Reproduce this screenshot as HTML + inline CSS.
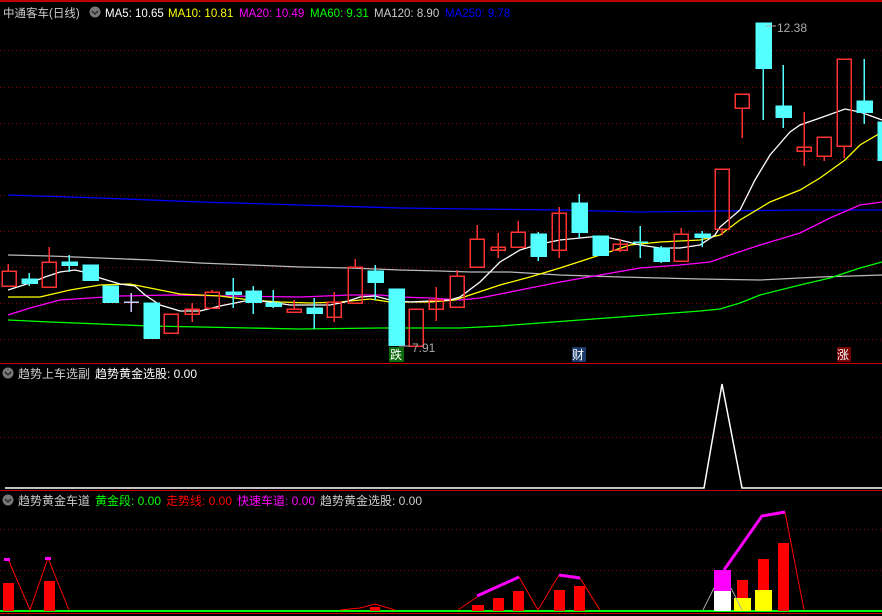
<!DOCTYPE html><html><head><meta charset="utf-8"><style>
body{margin:0;background:#000;width:882px;height:616px;overflow:hidden}
svg{display:block}
text{font-family:"Liberation Sans","Noto Sans CJK SC",sans-serif;font-size:12px}
.h{font-size:11.5px}
</style></head><body>
<svg width="882" height="616" viewBox="0 0 882 616" xmlns="http://www.w3.org/2000/svg" shape-rendering="crispEdges">
<rect width="882" height="616" fill="#000"/>
<line x1="0" y1="1" x2="882" y2="1" stroke="#b00" stroke-width="2"/>
<line x1="0" y1="363.5" x2="882" y2="363.5" stroke="#c00"/>
<line x1="0" y1="490.5" x2="882" y2="490.5" stroke="#c00"/>
<line x1="0" y1="613.5" x2="882" y2="613.5" stroke="#c00"/>
<g stroke="#800" stroke-dasharray="1,3">
<line x1="0" y1="50.5" x2="882" y2="50.5"/><line x1="0" y1="87.5" x2="882" y2="87.5"/><line x1="0" y1="123.5" x2="882" y2="123.5"/><line x1="0" y1="159.5" x2="882" y2="159.5"/><line x1="0" y1="195.5" x2="882" y2="195.5"/><line x1="0" y1="231.5" x2="882" y2="231.5"/><line x1="0" y1="267.5" x2="882" y2="267.5"/><line x1="0" y1="303.5" x2="882" y2="303.5"/><line x1="0" y1="339.5" x2="882" y2="339.5"/>
<line x1="0" y1="437.5" x2="882" y2="437.5"/><line x1="0" y1="529.5" x2="882" y2="529.5"/><line x1="0" y1="570.5" x2="882" y2="570.5"/>
</g>
<g shape-rendering="auto">
<circle cx="95" cy="12" r="5.5" fill="#777"/><path d="M92 11l3 3 3-3" stroke="#222" fill="none" stroke-width="1.3"/>
<circle cx="8" cy="373" r="5.5" fill="#777"/><path d="M5 372l3 3 3-3" stroke="#222" fill="none" stroke-width="1.3"/>
<circle cx="8" cy="500" r="5.5" fill="#777"/><path d="M5 499l3 3 3-3" stroke="#222" fill="none" stroke-width="1.3"/>
</g>
<text class="h" x="3" y="17" fill="#ccc">中通客车(日线)</text>
<text class="h" x="105" y="17" fill="#fff">MA5: 10.65</text>
<text class="h" x="168" y="17" fill="#ff0">MA10: 10.81</text>
<text class="h" x="239" y="17" fill="#f0f">MA20: 10.49</text>
<text class="h" x="310" y="17" fill="#0f0">MA60: 9.31</text>
<text class="h" x="374" y="17" fill="#ccc">MA120: 8.90</text>
<text class="h" x="445" y="17" fill="#00f">MA250: 9.78</text>
<text x="18" y="378" fill="#ccc">趋势上车选副</text>
<text x="95" y="378" fill="#fff">趋势黄金选股: 0.00</text>
<text x="18" y="505" fill="#ccc">趋势黄金车道</text>
<text x="95" y="505" fill="#0f0">黄金段: 0.00</text>
<text x="166" y="505" fill="#f00">走势线: 0.00</text>
<text x="237" y="505" fill="#f0f">快速车道: 0.00</text>
<text x="320" y="505" fill="#ccc">趋势黄金选股: 0.00</text>
<g fill="none" stroke-width="1" shape-rendering="auto">
<polyline stroke="#00f" stroke-width="1.3" points="8,195 100,198 200,202 300,205 400,208 470,209 560,210 640,212 720,211 800,210 882,210"/>
<polyline stroke="#bbb" stroke-width="1.3" points="8,255 50,256 100,258 150,260 200,263 250,265 300,267 350,268 400,270 440,271 470,272 510,272 560,275 620,277 700,279 760,280 820,277 882,275"/>
<polyline stroke="#0f0" stroke-width="1.3" points="8,320 50,322 100,324 150,326 200,327 250,328 300,329 380,328 460,328 500,326 540,323 580,320 620,317 660,314 700,311 720,309 740,303 760,295 800,285 830,278 860,268 882,262"/>
<polyline stroke="#f0f" stroke-width="1.3" points="8,315 30,308 60,300 90,298 120,296 170,295 230,296 300,297 350,295 380,295 400,297 430,298 460,300 480,298 520,290 560,282 600,275 640,268 680,265 710,262 730,255 760,245 800,233 830,218 860,205 882,202"/>
<polyline stroke="#ff0" stroke-width="1.3" points="8,297 40,297 70,290 100,285 130,284 150,288 180,294 220,296 250,300 280,302 310,303 340,302 370,299 390,302 430,302 455,300 470,295 500,285 530,277 560,268 600,255 630,245 660,242 700,240 720,235 740,220 770,202 800,190 820,178 845,160 860,145 882,132"/>
<polyline stroke="#fff" stroke-width="1.3" points="8,290 30,283 45,277 60,272 75,270 88,273 100,278 120,284 135,286 145,295 160,305 180,311 200,311 220,306 240,302 250,300 270,302 290,305 330,305 345,302 360,297 375,296 390,300 410,302 450,300 460,297 480,282 500,262 520,250 540,244 560,240 600,236 620,240 640,245 660,248 680,248 700,245 715,235 720,227 740,210 755,180 770,155 790,132 800,125 820,118 845,109 860,112 882,120"/>
</g>
<g stroke-width="1.5">
<g stroke="#f33" fill="none">
<line x1="8" y1="264" x2="8" y2="271"/><rect x="2" y="271" width="14" height="15"/>
<line x1="49" y1="247" x2="49" y2="262"/><rect x="42" y="262" width="14" height="25"/>
<rect x="164" y="314" width="14" height="19"/>
<line x1="192" y1="303" x2="192" y2="322"/><rect x="185" y="309" width="14" height="5"/>
<line x1="212" y1="290" x2="212" y2="292"/><rect x="205" y="292" width="14" height="16"/>
<line x1="294" y1="300" x2="294" y2="309"/><rect x="287" y="309" width="14" height="3"/>
<line x1="334" y1="292" x2="334" y2="322"/><rect x="327" y="302" width="14" height="15"/>
<line x1="355" y1="259" x2="355" y2="267"/><rect x="348" y="267" width="14" height="36"/>
<rect x="409" y="309" width="14" height="37"/>
<line x1="436" y1="287" x2="436" y2="321"/><rect x="429" y="300" width="14" height="9"/>
<line x1="457" y1="270" x2="457" y2="276"/><rect x="450" y="276" width="14" height="31"/>
<line x1="477" y1="225" x2="477" y2="239"/><rect x="470" y="239" width="14" height="28"/>
<line x1="498" y1="233" x2="498" y2="258"/><rect x="491" y="247" width="14" height="3"/>
<line x1="518" y1="221" x2="518" y2="232"/><rect x="511" y="232" width="14" height="15"/>
<line x1="559" y1="207" x2="559" y2="258"/><rect x="552" y="213" width="14" height="37"/>
<line x1="620" y1="239" x2="620" y2="252"/><rect x="613" y="244" width="14" height="6"/>
<line x1="681" y1="228" x2="681" y2="234"/><rect x="674" y="234" width="14" height="27"/>
<line x1="722" y1="229" x2="722" y2="235"/><rect x="715" y="169" width="14" height="60"/>
<line x1="742" y1="108" x2="742" y2="138"/><rect x="735" y="94" width="14" height="14"/>
<line x1="804" y1="112" x2="804" y2="166"/><rect x="797" y="147" width="14" height="4"/>
<line x1="824" y1="156" x2="824" y2="161"/><rect x="817" y="137" width="14" height="19"/>
<line x1="844" y1="146" x2="844" y2="158"/><rect x="837" y="59" width="14" height="87"/>
</g>
<g stroke="#5ff" fill="#5ff">
<line x1="29" y1="273" x2="29" y2="286"/><rect x="22" y="279" width="15" height="4"/>
<line x1="69" y1="255" x2="69" y2="272"/><rect x="62" y="262" width="15" height="3"/>
<rect x="83" y="265" width="15" height="15"/>
<rect x="103" y="286" width="15" height="16"/>
<line x1="131" y1="293" x2="131" y2="312" stroke="#ccf"/><line x1="124" y1="302" x2="139" y2="302" stroke="#ccf"/>
<rect x="144" y="303" width="15" height="35"/>
<line x1="233" y1="278" x2="233" y2="308"/><rect x="226" y="292" width="15" height="2"/>
<line x1="253" y1="286" x2="253" y2="314"/><rect x="246" y="291" width="15" height="11"/>
<line x1="273" y1="290" x2="273" y2="308"/><rect x="266" y="303" width="15" height="3"/>
<line x1="314" y1="298" x2="314" y2="329"/><rect x="307" y="308" width="15" height="5"/>
<line x1="375" y1="265" x2="375" y2="300"/><rect x="368" y="271" width="15" height="11"/>
<rect x="389" y="289" width="15" height="56"/>
<line x1="538" y1="232" x2="538" y2="261"/><rect x="531" y="234" width="15" height="22"/>
<line x1="579" y1="194" x2="579" y2="238"/><rect x="572" y="203" width="15" height="29"/>
<rect x="593" y="236" width="15" height="19"/>
<line x1="640" y1="226" x2="640" y2="258"/><line x1="633" y1="242" x2="648" y2="242"/>
<line x1="661" y1="246" x2="661" y2="263"/><rect x="654" y="248" width="15" height="13"/>
<line x1="702" y1="231" x2="702" y2="247"/><rect x="695" y="234" width="15" height="3"/>
<line x1="763" y1="68" x2="763" y2="120"/><rect x="756" y="23" width="15" height="45"/>
<line x1="783" y1="65" x2="783" y2="128"/><rect x="776" y="106" width="15" height="11"/>
<line x1="864" y1="59" x2="864" y2="124"/><rect x="857" y="101" width="15" height="11"/>
<rect x="878" y="122" width="6" height="38"/>
</g>
</g>
<text x="412" y="352" fill="#aaa" font-size="11">7.91</text>
<line x1="399" y1="346" x2="410" y2="346" stroke="#aaa"/>
<text x="777" y="32" fill="#aaa" font-size="11">12.38</text>
<line x1="766" y1="26" x2="776" y2="26" stroke="#aaa"/>
<rect x="389" y="347" width="15" height="15" fill="#0a6a0a"/><text x="390" y="359" fill="#fff">跌</text>
<rect x="572" y="347" width="14" height="15" fill="#1a3a6a"/><text x="572" y="359" fill="#fff">财</text>
<rect x="837" y="347" width="14" height="15" fill="#700"/><text x="837" y="359" fill="#fff">涨</text>
<polyline shape-rendering="auto" fill="none" stroke="#fff" stroke-width="1.5" points="5,488 704,488 722,384 742,488 882,488"/>
<line x1="0" y1="611" x2="882" y2="611" stroke="#0f0" stroke-width="2"/>
<g fill="#f00">
<rect x="3" y="583" width="11" height="28"/><rect x="44" y="581" width="11" height="30"/>
<rect x="370" y="607" width="10" height="4"/>
<rect x="472" y="605" width="12" height="6"/><rect x="493" y="598" width="11" height="13"/><rect x="513" y="591" width="11" height="20"/>
<rect x="554" y="590" width="11" height="21"/><rect x="574" y="586" width="11" height="25"/>
<rect x="737" y="580" width="11" height="31"/><rect x="758" y="559" width="11" height="52"/><rect x="778" y="543" width="11" height="68"/>
</g>
<rect x="734" y="598" width="17" height="13" fill="#ff0"/><rect x="755" y="590" width="17" height="21" fill="#ff0"/>
<rect x="714" y="570" width="17" height="21" fill="#f0f"/><rect x="714" y="591" width="17" height="20" fill="#fff"/>
<g fill="none" shape-rendering="auto">
<polyline stroke="#f00" points="8,559 30,610 48,558 69,610"/>
<polyline stroke="#f00" points="340,610 360,608 375,604 395,610"/>
<polyline stroke="#f00" points="458,610 477,597"/>
<polyline stroke="#f00" points="519,577 538,610 559,575"/>
<polyline stroke="#f00" points="580,578 600,610"/>
<polyline stroke="#f00" points="785,512 804,610"/>
<polyline stroke="#aaa" points="703,610 714,588"/><polyline stroke="#aaa" points="731,588 742,610"/>
<polyline stroke="#f0f" stroke-width="3" points="477,596 519,577"/>
<polyline stroke="#f0f" stroke-width="3" points="559,575 580,578"/>
<polyline stroke="#f0f" stroke-width="3" points="724,570 762,516 785,512"/>
</g>
<rect x="4" y="558" width="6" height="3" fill="#f0f"/><rect x="45" y="557" width="6" height="3" fill="#f0f"/>
</svg>
</body></html>
